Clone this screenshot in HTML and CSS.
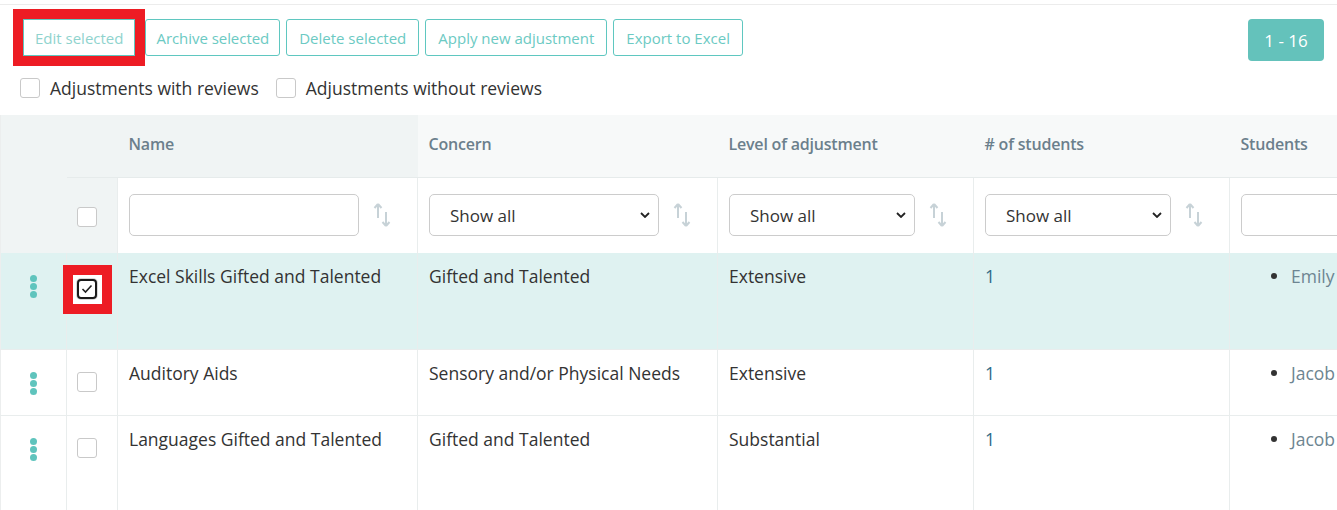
FILE: index.html
```html
<!DOCTYPE html>
<html>
<head>
<meta charset="utf-8">
<link rel="stylesheet" href="styles.css">
</head>
<body>
<div class="topline"></div>
<div class="toolbar">
  <div class="buttons">
    <span class="mark-btn"><button class="btn btn-edit">Edit selected</button></span>
    <button class="btn btn-tight">Archive selected</button>
    <button class="btn">Delete selected</button>
    <button class="btn">Apply new adjustment</button>
    <button class="btn">Export to Excel</button>
  </div>
  <div class="badge">1 - 16</div>
</div>
<div class="filters">
  <label class="chk-label"><span class="cbox"></span>Adjustments with reviews</label>
  <label class="chk-label"><span class="cbox"></span>Adjustments without reviews</label>
</div>
<div class="table-wrap">
<table class="grid">
  <colgroup>
    <col class="w-menu"><col class="w-check"><col class="w-300"><col class="w-300"><col class="w-256"><col class="w-256"><col class="w-rest">
  </colgroup>
  <thead>
    <tr class="head-row">
      <th rowspan="2" class="gray"></th>
      <th class="gray"></th>
      <th class="sorted">Name</th>
      <th>Concern</th>
      <th>Level of adjustment</th>
      <th># of students</th>
      <th>Students</th>
    </tr>
    <tr class="filter-row">
      <th class="gray chkcell"><span class="cbox"></span></th>
      <th><div class="fcell"><div class="field"></div><svg class="sort" viewBox="0 0 18 26"><path d="M5 2 L1.5 6 M5 2 L8.5 6 M5 2 V16" /><path d="M13 24 L9.5 20 M13 24 L16.5 20 M13 24 V10"/></svg></div></th>
      <th><div class="fcell"><div class="field select">Show all<svg class="chev" viewBox="0 0 10 6"><path d="M1 1 L5 5 L9 1"/></svg></div><svg class="sort" viewBox="0 0 18 26"><path d="M5 2 L1.5 6 M5 2 L8.5 6 M5 2 V16" /><path d="M13 24 L9.5 20 M13 24 L16.5 20 M13 24 V10"/></svg></div></th>
      <th><div class="fcell"><div class="field select">Show all<svg class="chev" viewBox="0 0 10 6"><path d="M1 1 L5 5 L9 1"/></svg></div><svg class="sort" viewBox="0 0 18 26"><path d="M5 2 L1.5 6 M5 2 L8.5 6 M5 2 V16" /><path d="M13 24 L9.5 20 M13 24 L16.5 20 M13 24 V10"/></svg></div></th>
      <th><div class="fcell"><div class="field select">Show all<svg class="chev" viewBox="0 0 10 6"><path d="M1 1 L5 5 L9 1"/></svg></div><svg class="sort" viewBox="0 0 18 26"><path d="M5 2 L1.5 6 M5 2 L8.5 6 M5 2 V16" /><path d="M13 24 L9.5 20 M13 24 L16.5 20 M13 24 V10"/></svg></div></th>
      <th><div class="fcell"><div class="field"></div></div></th>
    </tr>
  </thead>
  <tbody>
    <tr class="row selected r1">
      <td class="menu"><span class="dots"><i></i><i></i><i></i></span></td>
      <td class="chk1"><span class="marked"><span class="cbox checked"><svg viewBox="0 0 12 10"><path d="M1.5 5 L4.5 8 L10.5 1.5"/></svg></span></span></td>
      <td>Excel Skills Gifted and Talented</td>
      <td>Gifted and Talented</td>
      <td>Extensive</td>
      <td class="num">1</td>
      <td><ul class="students"><li>Emily</li></ul></td>
    </tr>
    <tr class="row r2">
      <td class="menu"><span class="dots"><i></i><i></i><i></i></span></td>
      <td class="chk2"><span class="cbox"></span></td>
      <td>Auditory Aids</td>
      <td>Sensory and/or Physical Needs</td>
      <td>Extensive</td>
      <td class="num">1</td>
      <td><ul class="students"><li>Jacob</li></ul></td>
    </tr>
    <tr class="row r3">
      <td class="menu"><span class="dots"><i></i><i></i><i></i></span></td>
      <td class="chk2"><span class="cbox"></span></td>
      <td>Languages Gifted and Talented</td>
      <td>Gifted and Talented</td>
      <td>Substantial</td>
      <td class="num">1</td>
      <td><ul class="students"><li>Jacob</li></ul></td>
    </tr>
  </tbody>
</table>
</div>
</body>
</html>
```

FILE: styles.css
```css
* { box-sizing: border-box; }
html, body { margin: 0; padding: 0; background: #fff; }
body {
  font-family: "Open Sans", "Liberation Sans", sans-serif;
  color: #333;
  width: 1337px;
  height: 510px;
  overflow: hidden;
}
.topline { height: 5px; border-bottom: 1px solid #ececec; }
.toolbar {
  display: flex;
  justify-content: space-between;
  align-items: flex-start;
  padding: 4px 13px 0 13px;
}
.buttons { display: flex; gap: 6px; align-items: flex-start; }
.mark-btn {
  display: block;
  border: 10px solid #ed1c24;
  line-height: 0;
  margin-right: -6px;
}
.btn {
  font-family: "Open Sans", "Liberation Sans", sans-serif;
  font-size: 15px;
  color: #6ccac3;
  background: #fff;
  border: 1px solid #5fc7c0;
  border-radius: 3px;
  height: 37px;
  padding: 0 12px;
  margin-top: 10px;
  white-space: nowrap;
  cursor: pointer;
}
.btn-tight { padding: 0 10px; letter-spacing: -0.05px; }
.btn-edit {
  color: #8fd3ce;
  margin-top: 0;
  border-radius: 0;
  padding: 0 11px;
}
.badge {
  background: #64c2bb;
  color: #fff;
  font-size: 17px;
  border-radius: 4px;
  width: 76px;
  height: 42px;
  margin-top: 10px;
  display: flex;
  align-items: center;
  justify-content: center;
}
.filters {
  display: flex;
  gap: 17px;
  padding: 0 0 0 20px;
  margin-top: 11px;
  height: 30px;
}
.chk-label {
  display: flex;
  align-items: center;
  gap: 10px;
  font-size: 17.5px;
  color: #333;
  height: 22px;
}
.cbox {
  display: inline-block;
  width: 20px;
  height: 20px;
  border: 1px solid #c9c9c9;
  border-radius: 3px;
  background: #fff;
  vertical-align: top;
}
.cbox.checked {
  border: 2px solid #1a1a1a;
  border-radius: 4px;
  display: flex;
  align-items: center;
  justify-content: center;
  box-shadow: 0 0 0 1px #d8d8d8;
}
.cbox.checked svg { width: 12px; height: 10px; }
.cbox.checked path { fill: none; stroke: #222; stroke-width: 1.6; }
.marked {
  display: inline-block;
  background: #fff;
  padding: 4px 5px 5px 4px;
  border: 10px solid #ed1c24;
  margin-left: -4px;
}
.table-wrap { width: 1337px; overflow: hidden; margin-top: 8px; }
.grid {
  border-collapse: collapse;
  table-layout: fixed;
  width: 1529px;
  border-left: 1px solid #eceeee;
}
.w-menu { width: 66px; }
.w-check { width: 51px; }
.w-300 { width: 300px; }
.w-256 { width: 256px; }
.w-rest { width: 300px; }
.grid th, .grid td { padding: 0 11px; text-align: left; }
.head-row th {
  height: 62px;
  padding-bottom: 4px;
  background: #f7f9f9;
  font-size: 16px;
  font-weight: 600;
  color: #6b7f8c;
  letter-spacing: -0.2px;
  border-bottom: 1px solid #e6ebeb;
}
.head-row th.gray, .head-row th.sorted, .filter-row th.gray { background: #f0f4f4; }
.head-row th:first-child { border-bottom: none; }
.filter-row th {
  height: 76px;
  background: #fff;
  border-right: 1px solid #e9eded;
  font-weight: normal;
}
.filter-row th.chkcell { padding: 4px 0 0 10px; line-height: 0; }
.fcell { display: flex; align-items: center; gap: 14px; padding-right: 15px; }
.field {
  flex: 1;
  height: 42px;
  border: 1px solid #cccccc;
  border-radius: 5px;
  background: #fff;
}
.field.select {
  display: flex;
  align-items: center;
  justify-content: space-between;
  padding: 0 8px 0 20px;
  font-size: 17px;
  color: #333;
}
.chev { width: 10px; height: 6px; }
.chev path { fill: none; stroke: #222; stroke-width: 1.8; }
.sort { width: 18px; height: 26px; flex: none; }
.sort path { fill: none; stroke: #c7d2d7; stroke-width: 2; }
.row td {
  vertical-align: top;
  font-size: 17.5px;
  color: #333;
  border-right: 1px solid #e9eded;
  border-bottom: 1px solid #e9eded;
  padding-top: 11px;
}
.r1 td { height: 96px; }
.r2 td { height: 66px; }
.r3 td { height: 100px; }
.selected td { background: #dff2f1; }
.row td.menu { padding: 22px 0 0 0; text-align: center; line-height: 0; }
.dots { display: inline-flex; flex-direction: column; gap: 1px; }
.dots i { width: 7px; height: 7px; border-radius: 50%; background: #5fc4bd; display: block; }
.row td.chk1 { padding: 12px 0 0 0; line-height: 0; }
.row td.chk2 { padding: 22px 0 0 10px; line-height: 0; }
.row td.num { color: #2f6a88; }
.students { margin: 0; padding-left: 30px; list-style: none; color: #6d8591; }
.students li { display: flex; align-items: center; gap: 14px; }
.students li::before {
  content: "";
  width: 6px;
  height: 6px;
  border-radius: 50%;
  background: #333;
  flex: none;
}
```
